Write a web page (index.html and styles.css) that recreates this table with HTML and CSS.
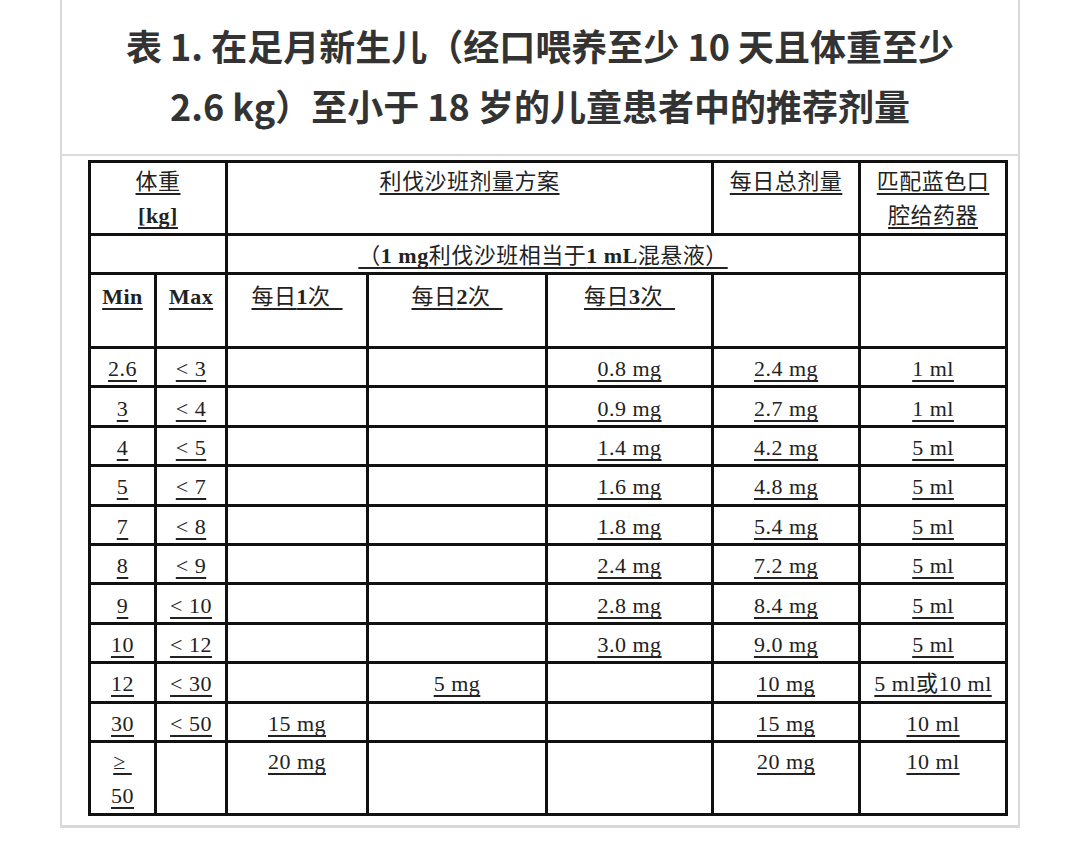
FILE: index.html
```html
<!DOCTYPE html>
<html lang="zh-CN">
<head>
<meta charset="utf-8">
<title>表 1</title>
<link rel="stylesheet" href="styles.css">
</head>
<body>
<div class="card">
  <div class="title">表 1. 在足月新生儿（经口喂养至少 10 天且体重至少<br>2.6 kg）至小于 18 岁的儿童患者中的推荐剂量</div>
  <div class="table-wrap">
    <table class="dose">
      <colgroup>
        <col class="c-min"><col class="c-max"><col class="c-1x"><col class="c-2x"><col class="c-3x"><col class="c-total"><col class="c-disp">
      </colgroup>
      <tr class="r-head">
        <td colspan="2" class="top"><span class="u">体重</span><br><span class="u b">[kg]</span></td>
        <td colspan="3" class="top"><span class="u">利伐沙班剂量方案</span></td>
        <td class="top"><span class="u">每日总剂量</span></td>
        <td class="top"><span class="u">匹配蓝色口</span><br><span class="u">腔给药器</span></td>
      </tr>
      <tr class="r-note">
        <td colspan="2"></td>
        <td colspan="4"><span class="u">（<b>1 mg</b>利伐沙班相当于<b>1 mL</b>混悬液）</span></td>
        <td></td>
      </tr>
      <tr class="r-sub">
        <td class="top"><span class="u b">Min</span></td>
        <td class="top"><span class="u b">Max</span></td>
        <td class="top"><span class="u">每日<b>1</b>次&nbsp;&nbsp;</span></td>
        <td class="top"><span class="u">每日<b>2</b>次&nbsp;&nbsp;</span></td>
        <td class="top"><span class="u">每日<b>3</b>次&nbsp;&nbsp;</span></td>
        <td></td>
        <td></td>
      </tr>
      <tr class="r-data"><td><span class="u">2.6</span></td><td><span class="u">&lt; 3</span></td><td></td><td></td><td><span class="u">0.8 mg</span></td><td><span class="u">2.4 mg</span></td><td><span class="u">1 ml</span></td></tr>
      <tr class="r-data"><td><span class="u">3</span></td><td><span class="u">&lt; 4</span></td><td></td><td></td><td><span class="u">0.9 mg</span></td><td><span class="u">2.7 mg</span></td><td><span class="u">1 ml</span></td></tr>
      <tr class="r-data"><td><span class="u">4</span></td><td><span class="u">&lt; 5</span></td><td></td><td></td><td><span class="u">1.4 mg</span></td><td><span class="u">4.2 mg</span></td><td><span class="u">5 ml</span></td></tr>
      <tr class="r-data"><td><span class="u">5</span></td><td><span class="u">&lt; 7</span></td><td></td><td></td><td><span class="u">1.6 mg</span></td><td><span class="u">4.8 mg</span></td><td><span class="u">5 ml</span></td></tr>
      <tr class="r-data"><td><span class="u">7</span></td><td><span class="u">&lt; 8</span></td><td></td><td></td><td><span class="u">1.8 mg</span></td><td><span class="u">5.4 mg</span></td><td><span class="u">5 ml</span></td></tr>
      <tr class="r-data"><td><span class="u">8</span></td><td><span class="u">&lt; 9</span></td><td></td><td></td><td><span class="u">2.4 mg</span></td><td><span class="u">7.2 mg</span></td><td><span class="u">5 ml</span></td></tr>
      <tr class="r-data"><td><span class="u">9</span></td><td><span class="u">&lt; 10</span></td><td></td><td></td><td><span class="u">2.8 mg</span></td><td><span class="u">8.4 mg</span></td><td><span class="u">5 ml</span></td></tr>
      <tr class="r-data"><td><span class="u">10</span></td><td><span class="u">&lt; 12</span></td><td></td><td></td><td><span class="u">3.0 mg</span></td><td><span class="u">9.0 mg</span></td><td><span class="u">5 ml</span></td></tr>
      <tr class="r-data"><td><span class="u">12</span></td><td><span class="u">&lt; 30</span></td><td></td><td><span class="u">5 mg</span></td><td></td><td><span class="u">10 mg</span></td><td><span class="u">5 ml或10 ml</span></td></tr>
      <tr class="r-data"><td><span class="u">30</span></td><td><span class="u">&lt; 50</span></td><td><span class="u">15 mg</span></td><td></td><td></td><td><span class="u">15 mg</span></td><td><span class="u">10 ml</span></td></tr>
      <tr class="r-last">
        <td class="top"><span class="u">≥&nbsp;</span><br><span class="u">50</span></td>
        <td class="top"></td>
        <td class="top"><span class="u">20 mg</span></td>
        <td class="top"></td>
        <td class="top"></td>
        <td class="top"><span class="u">20 mg</span></td>
        <td class="top"><span class="u">10 ml</span></td>
      </tr>
    </table>
  </div>
</div>
</body>
</html>
```

FILE: styles.css
```css
html, body {
  margin: 0;
  padding: 0;
  background: #ffffff;
}

.card {
  margin: 0 60px;
  border-left: 2px solid #d9d9d9;
  border-right: 2px solid #d9d9d9;
  border-bottom: 3px solid #d9d9d9;
  background: #ffffff;
}

.title {
  padding: 15px 0 19px;
  border-bottom: 2px solid #dcdcdc;
  text-align: center;
  font-family: "Noto Sans CJK SC", "Noto Sans", sans-serif;
  font-weight: 700;
  font-size: 36px;
  line-height: 60px;
  color: #333333;
}

.table-wrap {
  padding: 4px 12px 9px 26px;
}

.dose {
  width: 918px;
  table-layout: fixed;
  border-collapse: collapse;
  border: 2px solid #333333;
  font-family: "Liberation Serif", "Noto Sans CJK SC", serif;
  font-size: 22px;
  letter-spacing: 0.5px;
  line-height: 35px;
  color: #222222;
}

.c-min { width: 66px; }
.c-max { width: 71px; }
.c-1x { width: 141px; }
.c-2x { width: 179px; }
.c-3x { width: 166px; }
.c-total { width: 147px; }
.c-disp { width: 147px; }

.dose td {
  border: 3px solid #111111;
  padding: 0 2px;
  text-align: center;
  vertical-align: middle;
}

.dose td.top {
  vertical-align: top;
}

.r-head td { height: 66px; padding-top: 2px; line-height: 34px; }
.r-note td { height: 32px; padding-top: 4px; line-height: 30px; }
.r-sub td { height: 67px; padding-top: 4px; }
.r-data td { height: 32.4px; padding-top: 4px; line-height: 30px; }
.r-last td { height: 66px; padding-top: 2px; line-height: 34px; }

.u {
  text-decoration: underline;
  text-decoration-thickness: 1.5px;
  text-underline-offset: 4px;
  text-decoration-skip-ink: none;
}

.b, .u b {
  font-weight: 700;
}
```
